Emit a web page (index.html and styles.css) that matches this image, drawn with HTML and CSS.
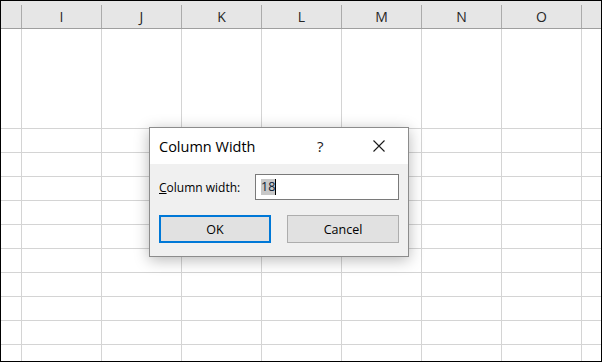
FILE: index.html
```html
<!DOCTYPE html>
<html lang="en">
<head>
    <meta charset="UTF-8">
    <meta name="viewport" content="width=device-width, initial-scale=1.0">
    <title>Column Width</title>
    <link rel="stylesheet" href="styles.css">
</head>
<body>
    <div class="sheet">
        <div class="col-head">
            <div class="hcell"></div>
            <div class="hcell">I</div>
            <div class="hcell">J</div>
            <div class="hcell">K</div>
            <div class="hcell">L</div>
            <div class="hcell">M</div>
            <div class="hcell">N</div>
            <div class="hcell">O</div>
            <div class="hcell last"></div>
        </div>
        <div class="grid" id="grid"></div>

        <div class="dialog">
            <div class="title-bar">
                <span class="title">Column Width</span>
                <span class="help">?</span>
                <svg class="close" width="12" height="12" viewBox="0 0 12 12">
                    <path d="M0.5 0.5 L11.5 11.5 M11.5 0.5 L0.5 11.5" stroke="#1a1a1a" stroke-width="1.1" fill="none"/>
                </svg>
            </div>
            <div class="dialog-body">
                <div class="field">
                    <label class="field-label"><u>C</u>olumn width:</label>
                    <div class="text-box"><span class="sel">18</span><span class="caret"></span></div>
                </div>
                <div class="buttons">
                    <button class="btn default">OK</button>
                    <button class="btn">Cancel</button>
                </div>
            </div>
        </div>
    </div>

    <script>
        // 9 columns: row header, I..O, partial column
        const grid = document.getElementById('grid');
        const rows = 11;
        for (let r = 0; r < rows; r++) {
            for (let c = 0; c < 9; c++) {
                const cell = document.createElement('div');
                cell.className = 'cell';
                if (c === 8) cell.className += ' last';
                if (r === rows - 1) cell.className += ' bottom';
                grid.appendChild(cell);
            }
        }
    </script>
</body>
</html>
```

FILE: styles.css
```css
* {
    box-sizing: border-box;
}
body {
    margin: 0;
    font-family: "Open Sans", "Liberation Sans", sans-serif;
    background: #fff;
}
.sheet {
    position: relative;
    width: 602px;
    height: 362px;
    border: 1px solid #000;
    overflow: hidden;
    background: #fff;
}
.col-head {
    display: grid;
    grid-template-columns: 21px repeat(7, 80px) 19px;
    height: 28px;
    background: #e6e6e6;
    border-bottom: 1px solid #9f9f9f;
}
.hcell {
    margin-top: 4px;
    height: 23px;
    line-height: 23px;
    text-align: center;
    font-size: 14px;
    color: #262626;
    border-right: 1px solid #ababab;
}
.hcell.last {
    border-right: none;
}
.grid {
    display: grid;
    grid-template-columns: 21px repeat(7, 80px) 19px;
    grid-template-rows: 100px repeat(9, 24px) 16px;
}
.cell {
    border-right: 1px solid #d4d4d4;
    border-bottom: 1px solid #d4d4d4;
}
.cell:nth-child(-n+9) {
    border-bottom: 1px solid #d4d4d4;
}
.cell.last {
    border-right: none;
}
.cell.bottom {
    border-bottom: none;
}

.dialog {
    position: absolute;
    left: 148px;
    top: 126px;
    width: 260px;
    height: 130px;
    border: 1px solid #8c8c8c;
    background: #f0f0f0;
    box-shadow: 0 3px 14px rgba(0, 0, 0, 0.28);
    color: #000;
}
.title-bar {
    display: flex;
    align-items: center;
    height: 36px;
    background: #fff;
    padding-left: 9px;
}
.title {
    font-size: 14.5px;
    flex: 1;
}
.help {
    font-size: 15px;
    width: 56px;
    color: #1a1a1a;
}
.close {
    margin-right: 23px;
}
.dialog-body {
    padding: 10px 9px 0 9px;
}
.field {
    display: flex;
    align-items: center;
    justify-content: space-between;
    font-size: 12px;
}
.text-box {
    width: 144px;
    height: 26px;
    background: #fff;
    border: 1px solid #7a7a7a;
    display: flex;
    align-items: center;
    padding-left: 5px;
    font-size: 12.5px;
}
.sel {
    background: #c8c8c8;
    color: #0a1a33;
    line-height: 16px;
}
.caret {
    display: inline-block;
    width: 1px;
    height: 16px;
    background: #000;
}
.buttons {
    display: flex;
    justify-content: space-between;
    margin-top: 15px;
}
.btn {
    width: 112px;
    height: 28px;
    font-family: inherit;
    font-size: 12.5px;
    color: #000;
    background: #e1e1e1;
    border: 1px solid #adadad;
    padding: 0;
}
.btn.default {
    border: 2px solid #0078d7;
}
```
